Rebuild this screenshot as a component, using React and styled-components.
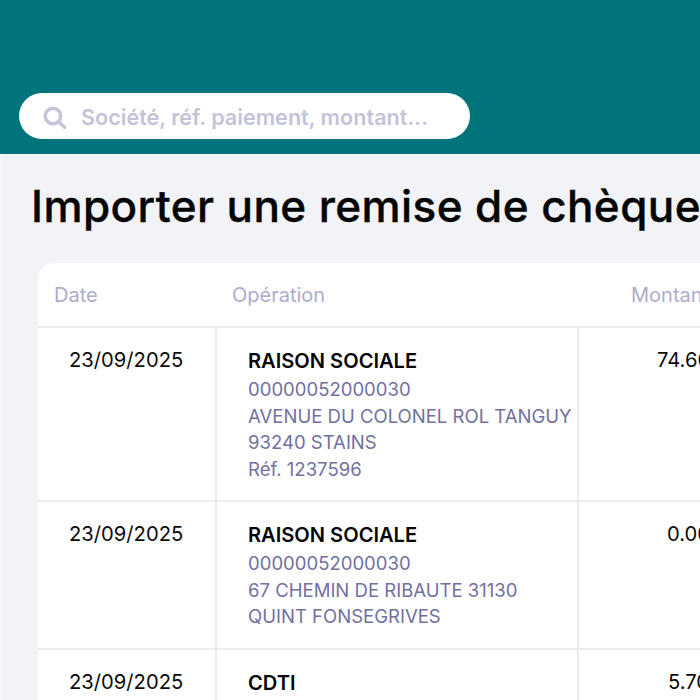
import React from "react";
import styled, { createGlobalStyle } from "styled-components";

const Global = createGlobalStyle`
  html, body { margin: 0; padding: 0; background: #f2f3f7; }
  body { font-family: "Inter", "Liberation Sans", sans-serif; }
`;

const Page = styled.div`
  width: 700px;
  height: 700px;
  overflow: hidden;
  background: #f2f3f7;
`;

const Header = styled.header`
  height: 154px;
  box-sizing: border-box;
  background: #00747a;
  padding: 93px 0 0 19px;
`;

const Search = styled.div`
  width: 451px;
  height: 46px;
  box-sizing: border-box;
  background: #fff;
  border-radius: 23px;
  display: flex;
  align-items: center;
  padding: 2px 0 0 23px;
  gap: 14px;
`;

const Placeholder = styled.span`
  font-size: 21.6px;
  font-weight: 600;
  color: #c5c3da;
  white-space: nowrap;
`;

const Content = styled.main`
  padding: 25px 0 0 37px;
  border-left: 1px solid #fafafc;
`;

const Title = styled.h1`
  margin: 0 0 0 -7px;
  font-family: "Inter", sans-serif;
  font-size: 44px;
  line-height: 54px;
  font-weight: 500;
  letter-spacing: 0.42px;
  -webkit-text-stroke: 0.4px #050505;
  color: #050505;
  white-space: nowrap;
`;

const Table = styled.div`
  margin-top: 30px;
  width: 760px;
  background: #fff;
  border-radius: 16px 0 0 0;
  display: grid;
  grid-template-columns: 179px 362px 1fr;
`;

const HeadCell = styled.div`
  height: 65px;
  box-sizing: border-box;
  border-bottom: 2px solid #ebebef;
  padding: 20px 0 0 ${p => p.$pad}px;
  font-size: 20px;
  line-height: 24px;
  color: #aeaccb;
  white-space: nowrap;
`;

const Cell = styled.div`
  box-sizing: border-box;
  height: ${p => p.$h}px;
  border-bottom: 2px solid #ebebef;
  border-right: ${p => p.$line ? "2px solid #ebebef" : "none"};
  padding: ${p => p.$top}px 0 0 ${p => p.$pad}px;
  white-space: nowrap;
`;

const DateText = styled.div`
  font-size: 20.2px;
  line-height: 28px;
  color: #0b0b0b;
`;

const Name = styled.div`
  font-size: 20.1px;
  line-height: 29px;
  font-weight: 600;
  color: #050505;
`;

const Detail = styled.div`
  font-size: 18.55px;
  line-height: 26.6px;
  color: #7270a1;
`;

const SearchIcon = () => (
  <svg width="25" height="25" viewBox="0 0 25 25" fill="none" stroke="#c5c3da" strokeWidth="3.4" strokeLinecap="round">
    <circle cx="11" cy="11" r="7.8" />
    <path d="M17 17l5.6 5.4" />
  </svg>
);

const rows = [
  { h: 174, date: "23/09/2025", name: "RAISON SOCIALE", amount: "74.60", indent: 78, lines: ["00000052000030", "AVENUE DU COLONEL ROL TANGUY", "93240 STAINS", "Réf. 1237596"] },
  { h: 148, date: "23/09/2025", name: "RAISON SOCIALE", amount: "0.00", indent: 88, lines: ["00000052000030", "67 CHEMIN DE RIBAUTE 31130", "QUINT FONSEGRIVES"] },
  { h: 120, date: "23/09/2025", name: "CDTI", amount: "5.70", indent: 89, lines: [] },
];

export default function App() {
  return (
    <Page>
      <Global />
      <Header>
        <Search>
          <SearchIcon />
          <Placeholder>Société, réf. paiement, montant...</Placeholder>
        </Search>
      </Header>
      <Content>
        <Title>Importer une remise de chèque</Title>
        <Table>
          <HeadCell $pad={16}>Date</HeadCell>
          <HeadCell $pad={15}>Opération</HeadCell>
          <HeadCell $pad={52}>Montant</HeadCell>
          {rows.map((r, i) => (
            <React.Fragment key={i}>
              <Cell $h={r.h} $top={18} $line $pad={31}><DateText>{r.date}</DateText></Cell>
              <Cell $h={r.h} $top={19} $line $pad={31}>
                <Name>{r.name}</Name>
                {r.lines.map(l => <Detail key={l}>{l}</Detail>)}
              </Cell>
              <Cell $h={r.h} $top={18} $pad={r.indent}><DateText>{r.amount}</DateText></Cell>
            </React.Fragment>
          ))}
        </Table>
      </Content>
    </Page>
  );
}
